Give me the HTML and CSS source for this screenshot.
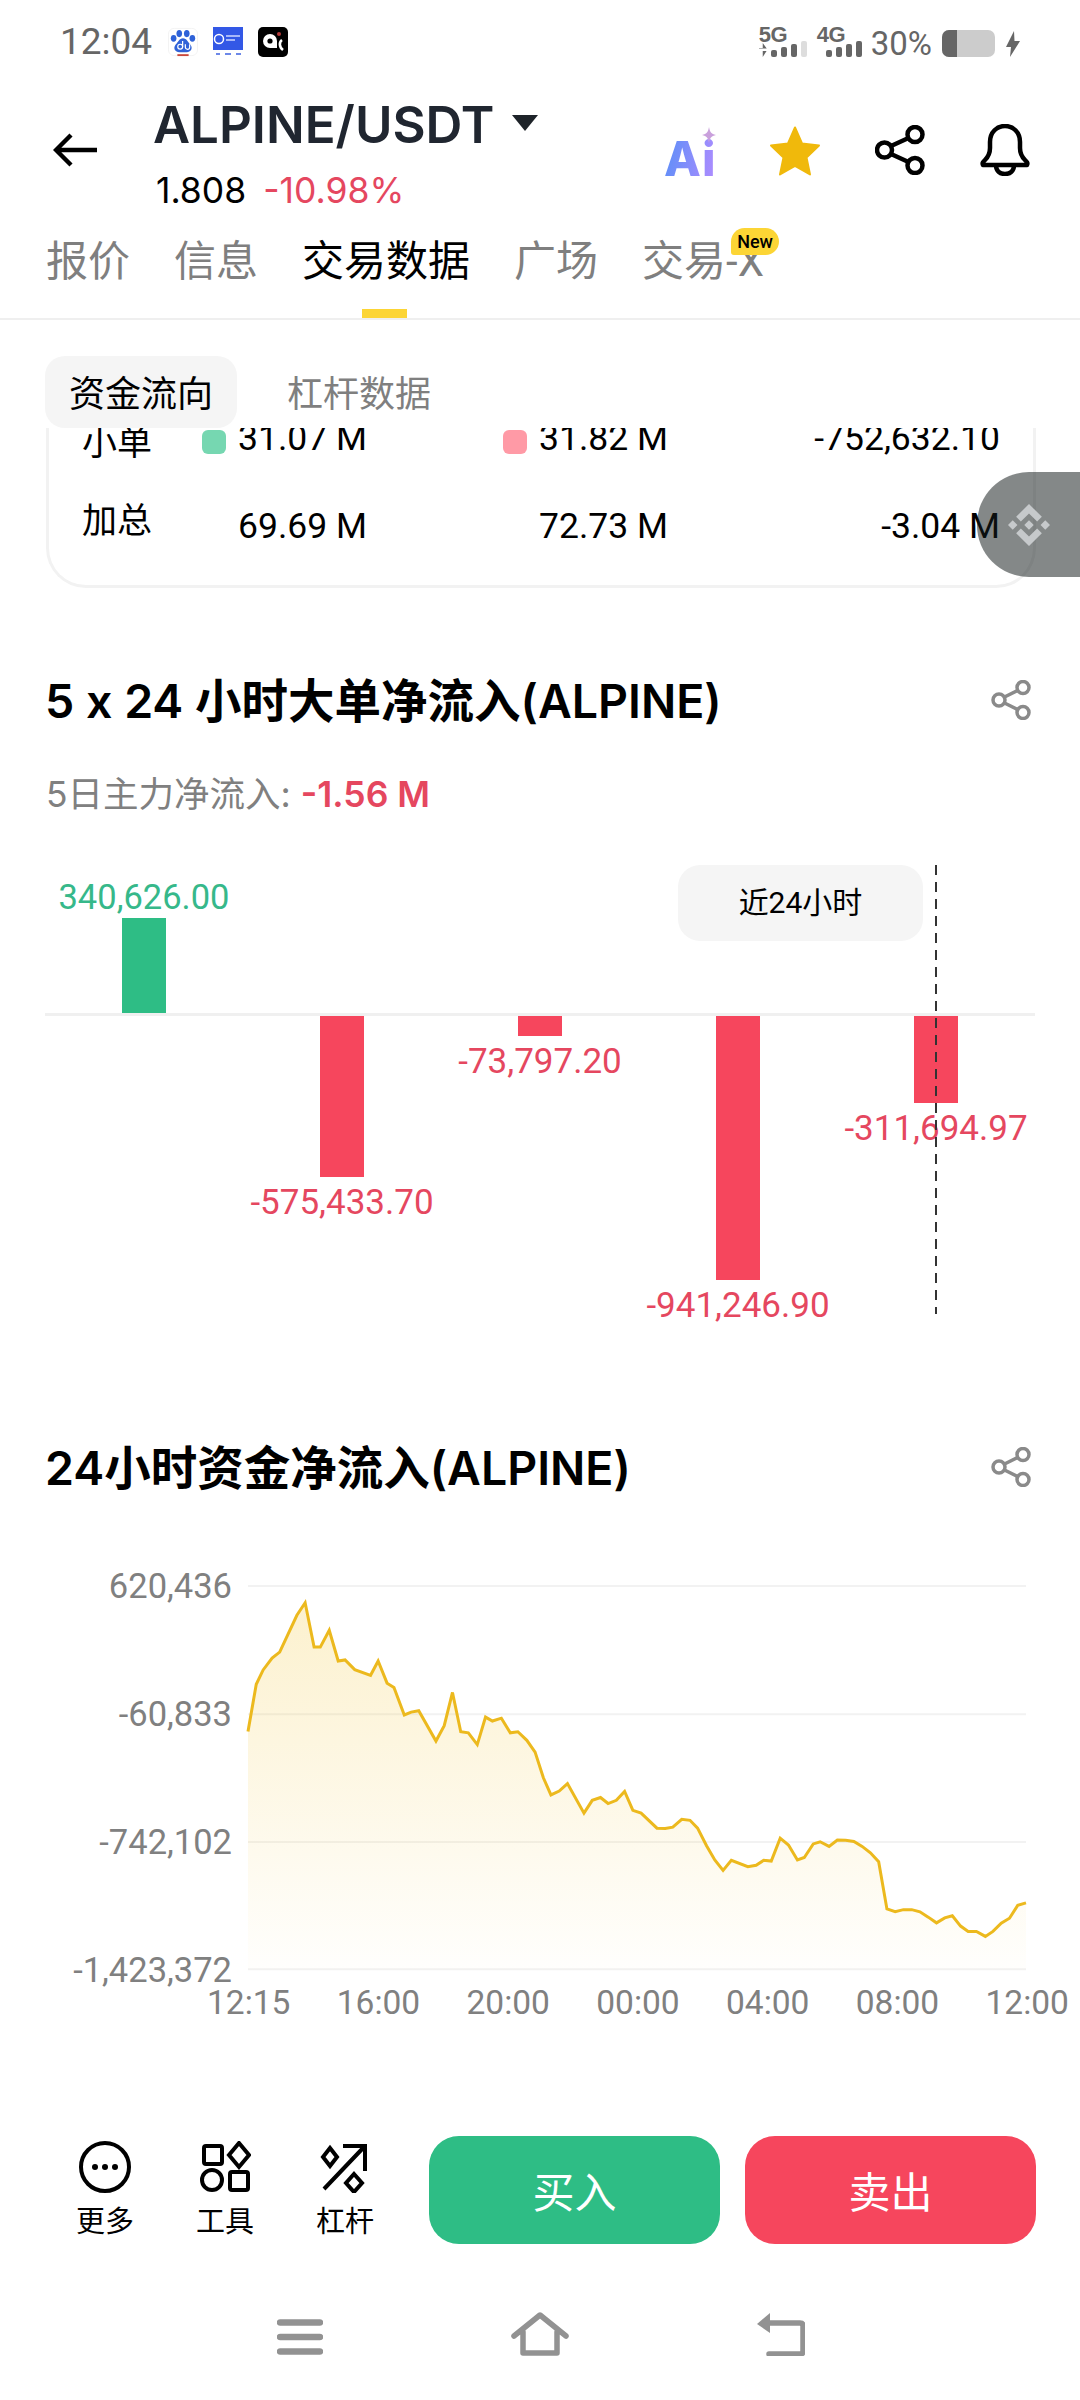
FILE: index.html
```html
<!DOCTYPE html>
<html lang="zh-CN">
<head>
<meta charset="utf-8">
<title>ALPINE/USDT</title>
<link rel="stylesheet" href="styles.css">
</head>
<body>
<div class="page">
  <div class="status">
    <span class="time">12:04</span>
    <svg class="app" viewBox="0 0 32 30"><rect x="0.5" y="0.5" width="31" height="29" rx="6" fill="#fff" stroke="#f2f2f2"/><ellipse cx="6" cy="11" rx="3" ry="3.6" fill="#2f62d8"/><ellipse cx="12" cy="6" rx="3" ry="3.8" fill="#2f62d8"/><ellipse cx="20" cy="6" rx="3" ry="3.8" fill="#2f62d8"/><ellipse cx="26" cy="11" rx="3" ry="3.6" fill="#2f62d8"/><path d="M16 11c-4 0-5 4-8 7-3 4 0 8 4 8h8c4 0 7-4 4-8-3-3-4-7-8-7z" fill="#2f62d8"/><circle cx="13" cy="20" r="2.6" fill="none" stroke="#fff" stroke-width="1.3"/><path d="M15.6 14v6M18.5 17.5v3a2.3 2.3 0 0 0 4.6 0v-3" fill="none" stroke="#fff" stroke-width="1.3"/><rect x="10" y="28" width="12" height="2" fill="#c8473c"/></svg>
    <svg class="app" viewBox="0 0 30 30"><rect width="30" height="23" y="0" fill="#3358e6"/><circle cx="6" cy="12" r="4.5" fill="none" stroke="#fff" stroke-width="1.5"/><path d="M13 9h14M13 13h9" stroke="#cfd8ff" stroke-width="1.6"/><path d="M3 27h4M12 27h6M23 27h5" stroke="#6d88e8" stroke-width="2"/></svg>
    <svg class="app" viewBox="0 0 30 30"><rect width="30" height="30" rx="5" fill="#000"/><path d="M12 7a7 7 0 1 0 0 14h7v-7a7 7 0 0 0-7-7z" fill="#fff"/><circle cx="12" cy="14" r="2.6" fill="#000"/><circle cx="21" cy="7" r="2" fill="#b23a3a"/><path d="M24 13c-3 2-3 7 1 10" fill="none" stroke="#fff" stroke-width="2.6"/></svg>
    <span class="status-gap"></span>
    <div class="net">
      <span class="net-label">5G</span>
      <div class="bars"><i class="arrows"></i><i class="b"></i><i class="b b2"></i><i class="b b3"></i><i class="b b4 off"></i></div>
    </div>
    <div class="net net-4g">
      <span class="net-label">4G</span>
      <div class="bars bars-right"><i class="b"></i><i class="b b2"></i><i class="b b3"></i><i class="b b4"></i></div>
    </div>
    <span class="pct">30%</span>
    <div class="battery"><div class="battery-fill"></div></div>
    <svg class="bolt" viewBox="0 0 14 26"><path d="M8 0 0 16h5l-1 10 10-16H8.5z" fill="#666"/></svg>
  </div>

  <header class="head">
    <svg class="back" viewBox="0 0 44 34"><path d="M44 17H3M18 2 3 17l15 15" fill="none" stroke="#000" stroke-width="4.4"/></svg>
    <div class="pair">
      <div class="pair-name"><span>ALPINE/USDT</span><i class="caret"></i></div>
      <div class="pair-price"><span>1.808</span><span class="red">-10.98%</span></div>
    </div>
    <div class="actions">
      <div class="ai"><span class="ai-text">Ai</span><svg class="spark" viewBox="0 0 14 16"><path d="M7 0c1 5 2 7 7 8-5 1-6 3-7 8-1-5-2-7-7-8 5-1 6-3 7-8z" fill="#c9a0dc"/></svg></div>
      <svg class="star" viewBox="0 0 52 50"><path d="M26 1.500 33 17.500 50 19.500 37.500 31.500 41 48.500 26 40 11 48.500 14.500 31.500 2 19.500 19 17.500z" fill="#f0b90b" stroke="#f0b90b" stroke-width="2" stroke-linejoin="round"/></svg>
      <svg class="share" viewBox="0 0 50 50"><g fill="none" stroke="#000" stroke-width="4.500"><circle cx="9.500" cy="25" r="7.500"/><circle cx="40" cy="9.500" r="7.500"/><circle cx="40" cy="40.500" r="7.500"/><path d="M16 21 33.500 13M16 29l17.500 8"/></g></svg>
      <svg class="bell" viewBox="0 0 50 52"><path d="M3 41h44c1-2 0-3-2-5-4-4-5-7-5-12v-6C40 8 33 2 25 2S10 8 10 18v6c0 5-1 8-5 12-2 2-3 3-2 5zM16 41c0 6 4 9 9 9s9-3 9-9" fill="none" stroke="#000" stroke-width="4.500" stroke-linejoin="round"/></svg>
    </div>
  </header>

  <nav class="tabs">
    <span class="tab">报价</span>
    <span class="tab">信息</span>
    <span class="tab tab-on">交易数据</span>
    <span class="tab">广场</span>
    <span class="tab tab-new">交易-X<em class="new">New</em></span>
  </nav>

  <div class="subtabs">
    <span class="pill pill-on">资金流向</span>
    <span class="pill">杠杆数据</span>
  </div>

  <section class="card">
    <div class="rows">
      <div class="row">
        <span class="row-name row-name-low">小单</span>
        <span class="cell"><i class="swatch swatch-g"></i>31.07 M</span>
        <span class="cell"><i class="swatch swatch-r"></i>31.82 M</span>
        <span class="cell cell-end">-752,632.10</span>
      </div>
      <div class="row">
        <span class="row-name row-name-high">加总</span>
        <span class="cell"><i class="swatch swatch-none"></i>69.69 M</span>
        <span class="cell"><i class="swatch swatch-none"></i>72.73 M</span>
        <span class="cell cell-end">-3.04 M</span>
      </div>
    </div>
  </section>

  <div class="section-head section-head-first">
    <h2 class="h">5 x 24 小时大单净流入(ALPINE)</h2>
    <svg class="share-s" viewBox="0 0 40 40"><g fill="none" stroke="#8a8a8a" stroke-width="3.500"><circle cx="8" cy="20" r="6"/><circle cx="32" cy="7.500" r="6"/><circle cx="32" cy="32.500" r="6"/><path d="M13.500 17 26.500 10.500M13.500 23l13 6.500"/></g></svg>
  </div>
  <p class="summary">5日主力净流入: <b class="red">-1.56 M</b></p>

  <div class="bars-chart">
    <div class="bar-col">
      <div class="up"><span class="v green">340,626.00</span><i class="bar bar-g" style="height:95px"></i></div>
      <div class="down"></div>
    </div>
    <div class="bar-col">
      <div class="up"></div>
      <div class="down"><i class="bar bar-r" style="height:161px"></i><span class="v red">-575,433.70</span></div>
    </div>
    <div class="bar-col">
      <div class="up"></div>
      <div class="down"><i class="bar bar-r" style="height:20px"></i><span class="v red">-73,797.20</span></div>
    </div>
    <div class="bar-col">
      <div class="up"></div>
      <div class="down"><i class="bar bar-r" style="height:264px"></i><span class="v red">-941,246.90</span></div>
    </div>
    <div class="bar-col">
      <div class="up"></div>
      <div class="down"><i class="bar bar-r" style="height:87px"></i><span class="v red">-311,694.97</span></div>
    </div>
    <div class="tip">近24小时</div>
    <i class="cursor"></i>
  </div>

  <div class="section-head section-head-second">
    <h2 class="h">24小时资金净流入(ALPINE)</h2>
    <svg class="share-s" viewBox="0 0 40 40"><g fill="none" stroke="#8a8a8a" stroke-width="3.500"><circle cx="8" cy="20" r="6"/><circle cx="32" cy="7.500" r="6"/><circle cx="32" cy="32.500" r="6"/><path d="M13.500 17 26.500 10.500M13.500 23l13 6.500"/></g></svg>
  </div>

  <div class="line-chart">
    <div class="y-axis"><span>620,436</span><span>-60,833</span><span>-742,102</span><span>-1,423,372</span></div>
    <div class="plot-col">
      <svg class="plot" viewBox="360 243 1130 1075" preserveAspectRatio="none">
        <defs><linearGradient id="fill" x1="0" y1="0" x2="0" y2="1"><stop offset="0" stop-color="#f0b90b" stop-opacity=".2"/><stop offset="1" stop-color="#f0b90b" stop-opacity=".01"/></linearGradient></defs>
        <path d="M360 243H1490M360 602H1490M360 960H1490M360 1316H1490" stroke="#f2f2f2" stroke-width="2" vector-effect="non-scaling-stroke" fill="none"/>
        <polygon fill="url(#fill)" points="360,1318 360,650 372,518 382,478 395,445 406,428 431,325 443,290 456,414 465,414 478,367 491,453 501,450 515,477 538,493 549,453 562,515 572,527 587,604 597,596 608,592 633,677 645,634 657,541 669,651 680,654 693,687 705,610 715,621 728,613 741,654 752,651 765,675 777,708 789,780 800,828 812,817 824,796 848,879 860,843 872,835 883,852 895,843 907,818 919,871 931,879 954,921 966,922 977,918 990,896 1002,899 1013,921 1026,970 1038,1010 1050,1039 1062,1011 1086,1029 1098,1025 1109,1011 1120,1013 1133,949 1145,968 1158,1010 1168,1003 1181,965 1191,959 1204,972 1216,954 1228,955 1240,958 1252,972 1264,990 1276,1015 1288,1147 1300,1155 1312,1149 1324,1149 1336,1155 1348,1170 1360,1186 1372,1172 1383,1166 1395,1195 1406,1210 1418,1210 1431,1224 1442,1210 1454,1187 1466,1173 1478,1137 1490,1130 1490,1318"/>
        <polyline fill="none" stroke="#ecb91e" stroke-width="3" vector-effect="non-scaling-stroke" points="360,650 372,518 382,478 395,445 406,428 431,325 443,290 456,414 465,414 478,367 491,453 501,450 515,477 538,493 549,453 562,515 572,527 587,604 597,596 608,592 633,677 645,634 657,541 669,651 680,654 693,687 705,610 715,621 728,613 741,654 752,651 765,675 777,708 789,780 800,828 812,817 824,796 848,879 860,843 872,835 883,852 895,843 907,818 919,871 931,879 954,921 966,922 977,918 990,896 1002,899 1013,921 1026,970 1038,1010 1050,1039 1062,1011 1086,1029 1098,1025 1109,1011 1120,1013 1133,949 1145,968 1158,1010 1168,1003 1181,965 1191,959 1204,972 1216,954 1228,955 1240,958 1252,972 1264,990 1276,1015 1288,1147 1300,1155 1312,1149 1324,1149 1336,1155 1348,1170 1360,1186 1372,1172 1383,1166 1395,1195 1406,1210 1418,1210 1431,1224 1442,1210 1454,1187 1466,1173 1478,1137 1490,1130"/>
      </svg>
      <div class="x-axis"><span>12:15</span><span>16:00</span><span>20:00</span><span>00:00</span><span>04:00</span><span>08:00</span><span>12:00</span></div>
    </div>
  </div>

  <footer class="actionbar">
    <div class="tools">
      <div class="tool">
        <svg class="tool-i" viewBox="0 0 52 52"><circle cx="26" cy="26" r="24" fill="none" stroke="#000" stroke-width="4"/><circle cx="16" cy="26" r="3" /><circle cx="26" cy="26" r="3"/><circle cx="36" cy="26" r="3"/></svg>
        <span>更多</span>
      </div>
      <div class="tool">
        <svg class="tool-i" viewBox="0 0 52 52"><g fill="none" stroke="#000" stroke-width="4"><rect x="5" y="5" width="18" height="18" rx="2"/><path d="M40 3 50 15 40 27 30 15z" transform="translate(0 -1)"/><circle cx="13" cy="39" r="10"/><rect x="31" y="31" width="18" height="18" rx="2"/></g></svg>
        <span>工具</span>
      </div>
      <div class="tool">
        <svg class="tool-i" viewBox="0 0 52 52"><g fill="none" stroke="#000" stroke-width="4"><path d="M5 48 45 6M24 5h22v25"/><path d="M11 7l7 9-7 9-7-9z"/><path d="M35 33l8 9-8 9-8-9z"/></g></svg>
        <span>杠杆</span>
      </div>
    </div>
    <button class="trade trade-buy">买入</button>
    <button class="trade trade-sell">卖出</button>
  </footer>

  <div class="sysnav">
    <svg class="nav-i nav-menu" viewBox="0 0 46 36"><path d="M3 3.500h40M3 18h40M3 32.500h40" stroke="#929292" stroke-width="6.500" stroke-linecap="round"/></svg>
    <svg class="nav-i nav-home" viewBox="0 0 58 44"><path d="M3 24 29 3l26 21M12 20v21h34V20" fill="none" stroke="#929292" stroke-width="5.500" stroke-linejoin="round" stroke-linecap="round"/></svg>
    <svg class="nav-i nav-return" viewBox="0 0 48 44"><path d="M10 11h33c2 0 3 1 3 3v25c0 2-1 3-3 3H12" fill="none" stroke="#929292" stroke-width="5.500" stroke-linecap="round"/><path d="M0 12 13 1v20z" fill="#929292"/></svg>
  </div>

  <div class="float">
    <svg class="bnb" viewBox="0 0 32 32"><path d="M9.800 13.400 16 7.200l6.200 6.200 3.600-3.600L16 0 6.200 9.800zM0 16l3.600-3.600L7.200 16l-3.600 3.600zM9.800 18.600 16 24.800l6.200-6.200 3.600 3.600L16 32 6.200 22.200zM24.800 16l3.600-3.600L32 16l-3.600 3.600zM19.600 16 16 12.400 12.400 16 16 19.600z" fill="#c6c9cb"/></svg>
  </div>
</div>
</body>
</html>
```

FILE: styles.css
```css
* { box-sizing: border-box; }
html, body { margin: 0; padding: 0; background: #fff; }
body { font-family: Roboto, "Noto Sans CJK SC", sans-serif; color: #000; }
i, em { font-style: normal; display: block; }
.page { position: relative; width: 1080px; height: 2400px; overflow: hidden; background: #fff; }
.red { color: #e5475f; }
.green { color: #36b88a; }

/* status bar */
.status { height: 84px; padding: 27px 60px 0; display: flex; align-items: flex-start; }
.time { font-size: 37px; line-height: 30px; color: #666; width: 108px; }
.app { width: 30px; height: 30px; margin-right: 15px; display: block; }
.status-gap { flex: 1; }
.net { width: 58px; display: flex; flex-direction: column; }
.net-label { font: 700 22px/15px "Liberation Sans", sans-serif; color: #666; letter-spacing: -.5px; }
.bars { display: flex; align-items: flex-end; gap: 4px; height: 15px; margin-top: 0; }
.arrows { width: 8px; height: 14px; background: linear-gradient(#666 0 40%, transparent 40% 55%, #666 55%); clip-path: polygon(50% 0, 100% 40%, 0 40%, 0 55%, 100% 55%, 50% 100%); }
.b { width: 6px; height: 7px; background: #666; border-radius: 2px; }
.b2 { height: 10px; }
.b3 { height: 13px; }
.b4 { height: 16px; }
.off { background: #ddd; }
.bars-right { padding-left: 9px; }
.pct { font-size: 33px; line-height: 30px; margin: 2px 10px 0 -4px; color: #666; }
.battery { width: 53px; height: 27px; margin: 3px 0 0; background: #ccc; border-radius: 7px; overflow: hidden; }
.battery-fill { width: 15px; height: 100%; background: #666; }
.bolt { width: 14px; height: 26px; margin: 4px 0 0 11px; display: block; }

/* pair header */
.head { height: 144px; padding: 20px 50px 0 53px; display: flex; align-items: flex-start; }
.back { width: 44px; height: 34px; margin-top: 29px; display: block; flex: none; }
.pair { margin-left: 56px; }
.pair-name { display: flex; align-items: flex-start; height: 50px; font: 600 51px/42px Inter, sans-serif; color: #202630; }
.caret { width: 0; height: 0; margin: 11px 0 0 17px; border: 13px solid transparent; border-top: 16px solid #1e2329; border-bottom: 0; }
.pair-price { display: flex; gap: 17px; margin: 22px 0 0 3px; font: 400 35.500px/30px Inter, sans-serif; }
.actions { margin-left: auto; display: flex; align-items: flex-start; }
.ai { position: relative; width: 52px; height: 40px; margin-top: 32px; }
.ai-text { display: block; font: 800 48px/46px Inter, sans-serif; letter-spacing: 1px; background: linear-gradient(100deg, #5a8ff7, #b08cff); -webkit-background-clip: text; background-clip: text; color: transparent; }
.spark { position: absolute; right: 0; top: -9px; width: 14px; height: 16px; }
.star { width: 52px; height: 50px; margin: 22px 0 0 53px; display: block; }
.share { width: 50px; height: 50px; margin: 21px 0 0 54px; display: block; }
.bell { width: 50px; height: 52px; margin: 20px 0 0 55px; display: block; }

/* tabs */
.tabs { height: 92px; padding: 0 0 0 46px; display: flex; gap: 44px; border-bottom: 2px solid #efefef; font-size: 42px; line-height: 68px; color: #7f7f7f; }
.tab { position: relative; display: block; height: 90px; }
.tab-on { color: #000; }
.tab-on::after { content: ""; position: absolute; left: 60px; bottom: 0; width: 45px; height: 9px; background: #fcd535; }
.new { position: absolute; top: 0; left: 89px; width: 48px; height: 27px; border-radius: 14px 14px 14px 3px; background: #fcd535; color: #000; font: 500 18px/27px Roboto, sans-serif; text-align: center; }

/* sub tabs */
.subtabs { height: 108px; padding: 36px 0 0 45px; display: flex; font-size: 36px; color: #7f7f7f; }
.pill { display: block; height: 72px; line-height: 78px; padding: 0 24px; margin-right: 26px; border-radius: 20px; }
.pill-on { background: #f5f5f5; color: #000; }

/* card */
.card { height: 160px; margin: 0 44px 0 46px; border: 3px solid #f2f2f2; border-top: 0; border-radius: 0 0 40px 40px; overflow: hidden; }
.rows { margin-top: -34px; padding-left: 33px; }
.row { height: 88px; display: grid; grid-template-columns: 120px 301px 1fr auto; align-items: center; padding-right: 33px; font-size: 35.500px; }
.row-name { font-size: 35px; }
.row-name-low { margin-top: 3px; }
.row-name-high { margin-bottom: 18px; }
.cell { display: flex; align-items: center; }
.swatch { width: 24px; height: 24px; border-radius: 6px; margin: 0 12px 0 0; }
.swatch-g { background: #76d7b1; margin-top: 8px; }
.swatch-r { background: #ff9aa6; margin-top: 8px; }
.swatch-none { background: transparent; }

/* section heads */
.section-head { display: flex; align-items: center; justify-content: space-between; padding: 0 49px 0 45px; height: 60px; }
.section-head-first { margin-top: 83px; }
.section-head-second { margin-top: 121px; }
.h { margin: 0; font: 600 46.500px/60px Inter, "Noto Sans CJK SC", sans-serif; font-feature-settings: "calt" 0; }
.share-s { width: 40px; height: 40px; display: block; margin-top: -2px; }
.summary { margin: 42px 0 0 46px; font: 400 35.500px/44px Inter, "Noto Sans CJK SC", sans-serif; color: #808080; }
.summary b { font-weight: 600; }

/* bar chart */
.bars-chart { position: relative; width: 990px; height: 456px; margin: 44px 0 0 45px; display: grid; grid-template-columns: repeat(5, 1fr); grid-template-rows: 1fr; }
.bar-col { display: grid; grid-template-rows: 155px 1fr; justify-items: center; }
.up { display: flex; flex-direction: column; align-items: center; justify-content: flex-end; border-bottom: 3px solid #f0f0f0; width: 100%; }
.down { display: flex; flex-direction: column; align-items: center; }
.bar { width: 44px; }
.bar-g { background: #2ebd85; }
.bar-r { background: #f6465d; }
.v { font-size: 35px; line-height: 40px; white-space: nowrap; }
.up .v { margin-bottom: 1px; font-size: 34.500px; }
.down .v { margin-top: 6px; }
.tip { position: absolute; left: 633px; top: 4px; width: 245px; height: 76px; border-radius: 22px; background: #f5f5f5; font-size: 30px; line-height: 76px; text-align: center; }
.cursor { position: absolute; left: 890px; top: 4px; height: 449px; width: 2px; background: repeating-linear-gradient(#333 0 10px, transparent 10px 17px); }

/* line chart */
.line-chart { display: grid; grid-template-columns: 232px 778px; column-gap: 16px; margin-top: 88px; align-items: start; }
.y-axis { height: 414px; margin-top: -15px; display: flex; flex-direction: column; justify-content: space-between; align-items: flex-end; font-size: 34.500px; line-height: 30px; color: #808080; }
.plot { display: block; width: 778px; height: 384px; overflow: visible; }
.x-axis { display: flex; justify-content: space-between; margin: 16px -43px 0 -41px; font-size: 33.500px; line-height: 34px; color: #808080; }

/* action bar */
.actionbar { position: absolute; left: 0; right: 0; top: 2136px; height: 108px; display: flex; padding-left: 76px; }
.tools { display: flex; gap: 62px; width: 353px; }
.tool { width: 58px; display: flex; flex-direction: column; align-items: center; font-size: 29px; line-height: 36px; }
.tool-i { width: 52px; height: 52px; margin: 5px 0 11px; display: block; }
.trade { width: 291px; height: 108px; margin-right: 25px; border: 0; border-radius: 30px; color: #fff; font: 400 42px/106px "Noto Sans CJK SC", sans-serif; padding: 0; }
.trade-buy { background: #2ebd85; }
.trade-sell { background: #f6465d; }

/* system nav */
.sysnav { position: absolute; left: 0; right: 0; top: 2312px; height: 44px; display: flex; align-items: flex-start; padding-left: 277px; }
.nav-i { display: block; }
.nav-menu { width: 46px; height: 36px; margin-top: 7px; }
.nav-home { width: 58px; height: 44px; margin-left: 188px; }
.nav-return { width: 48px; height: 44px; margin-left: 188px; }

/* floating */
.float { position: absolute; right: 0; top: 472px; width: 103px; height: 105px; border-radius: 52px 0 0 52px; background: rgba(20, 26, 26, .52); display: flex; align-items: center; }
.bnb { width: 42px; height: 42px; margin-left: 31px; display: block; }
```
